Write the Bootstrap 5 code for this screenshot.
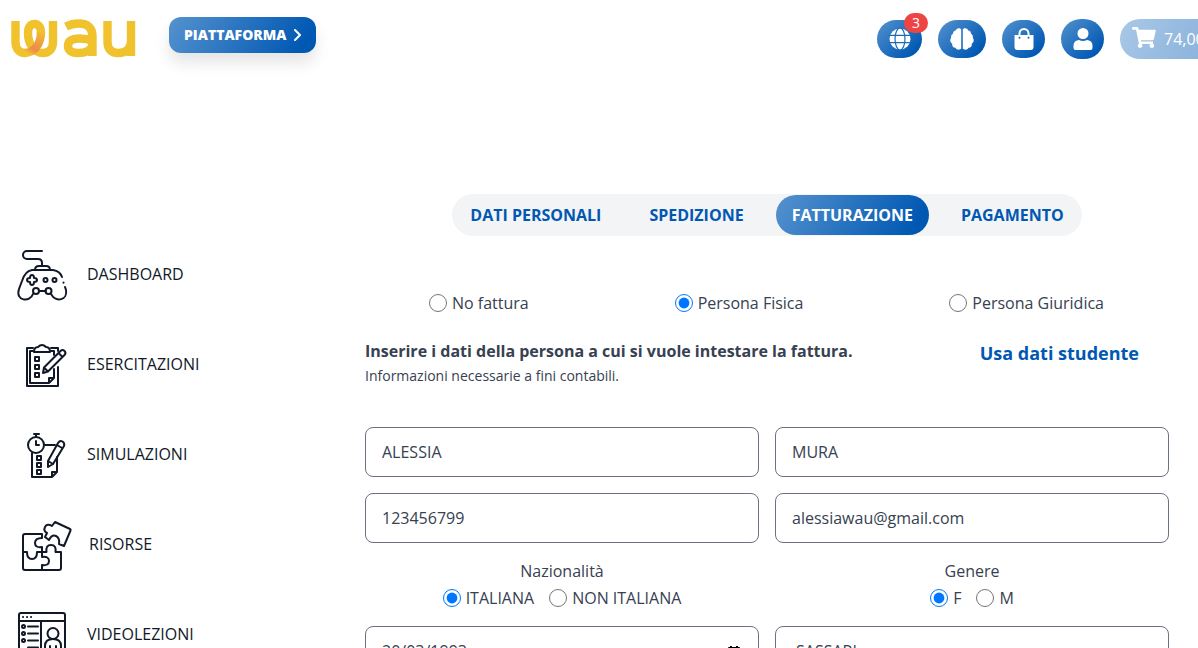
<!DOCTYPE html>
<html lang="it">
<head>
<meta charset="utf-8">
<meta name="viewport" content="width=device-width, initial-scale=1">
<title>WAU – Fatturazione</title>
<link href="https://cdn.jsdelivr.net/npm/bootstrap@5.3.0/dist/css/bootstrap.min.css" rel="stylesheet">
<style>
:root { --wau-blue: #0058b3; --wau-grad: linear-gradient(120deg, #5592ce, #0058b3 90%); }
html { overflow: hidden; }
body { font-family: "Open Sans", "Noto Sans", sans-serif; color: #374151; line-height: 24px; overflow: hidden; }
.site-header { height: 78px; padding-left: 8px; }
.logo { width: 130px; height: 64px; }
.btn-platform { background: var(--wau-grad); color: #fff; font-size: 14px; font-weight: 800; line-height: 20px; padding: 8px 15px; border: 0; border-radius: 12px; margin: 0 0 8px 31px; box-shadow: 0 10px 15px rgba(0,0,0,.1); }
.btn-round { background: linear-gradient(135deg, #5592ce, #0058b3 85%); color: #fff; height: 40px; border: 0; padding: 0 10px 2px; }
.btn-short { height: 38px; }
.count { position: absolute; top: -7px; right: -6px; background: #ef4444; color: #fff; font-size: 14px; line-height: 20px; width: 24px; border-radius: 10px; }
.btn-cart { width: 78px; opacity: .5; background: linear-gradient(120deg, #5592ce, #0058b3 130px); color: #fff; height: 40px; border: 0; padding: 0 0 0 12px; overflow: hidden; white-space: nowrap; }
.btn-cart svg { margin-bottom: 4px; }
.side { width: 336px; padding-top: 229px; margin-top: -78px; padding-left: 17px; }
.side a { height: 90px; color: #111827; gap: 20px; text-decoration: none; }
.side svg { width: 50px; height: 54px; fill: none; stroke: #111827; stroke-width: 2; stroke-linecap: round; stroke-linejoin: round; overflow: visible; }
.side svg.wide { width: 52px; }
.page-main { padding: 116px 29px 0; min-width: 0; }
.steps { background: #f3f4f6; border-radius: 21px; height: 42px; padding: 0 2px; }
.steps .nav-link { color: var(--wau-blue); font-weight: 700; padding: 8px 16px; border-radius: 20px; line-height: 24px; }
.steps .nav-link.active { background: var(--wau-grad); color: #fff; }
.steps .nav-item + .nav-item { margin-left: 16px; }
.choice { display: inline-flex; align-items: center; gap: 5px; }
.choice input { width: 18px; height: 18px; margin: 0; }
.kinds { padding: 0 65px 0 64px; margin-top: 55px; }
.answers { gap: 15px; padding-top: 3px; }
.intro { margin-top: 24px; padding-right: 30px; margin-bottom: 39px; }
.intro h1 { font-size: 16px; line-height: 24px; font-weight: 700; margin: 0; }
.intro p { font-size: 14px; line-height: 24px; margin: 1px 0 0; }
.intro a { font-size: 18px; line-height: 28px; font-weight: 700; color: var(--wau-blue); text-decoration: none; }
.fields { --bs-gutter-x: 16px; --bs-gutter-y: 16px; }
.fields .form-control { height: 50px; border: 1px solid #6b7280; border-radius: 8px; padding: 8px 16px; color: #374151; }
.fields .form-control.city { padding-left: 20px; }
.pick-date { position: absolute; right: 18px; top: 17px; border: 0; background: none; padding: 0; line-height: 1; }
</style>
</head>
<body>
<header class="site-header d-flex align-items-center">
  <a href="#" aria-label="WAU">
    <svg class="logo d-block" viewBox="8 6 130 64" fill="none" stroke="#f0c22d" stroke-width="8.4">
      <defs><linearGradient id="fold" gradientUnits="userSpaceOnUse" x1="42" y1="30" x2="29" y2="53"><stop stop-color="#f0c22d"/><stop offset=".45" stop-color="#ef9f3e"/><stop offset=".75" stop-color="#ed8a4c"/><stop offset="1" stop-color="#f0c22d"/></linearGradient></defs>
      <path d="M41 32C41 26 38.500 23 34.500 23C30.500 23 28 26 28 32C28 43 34 52 43 52C49 52 53 48 53 41V20"/>
      <path d="M15.500 20V41C15.500 48 19.500 52 25 52"/>
      <path stroke="url(#fold)" d="M24.500 52C35 52 41 42 41 31"/>
      <path d="M66 25.500C70 23.500 74 22.500 79 22.500C88 22.500 92.500 27 92.500 35V55M92.500 40C88 38 84 37.500 80 37.500C72 37.500 68 40 68 45C68 50 72 52 78 52C87 52 92.500 48 92.500 42M107.500 20V41C107.500 48 111 52 118 52C126 52 131 48 131 40M131 20V55"/>
    </svg>
  </a>
  <button type="button" class="btn btn-platform d-flex align-items-center">PIATTAFORMA
    <svg class="ms-2" width="7" height="12" viewBox="0 0 7 12" fill="none" stroke="#fff" stroke-width="2" stroke-linecap="round" stroke-linejoin="round"><path d="M1 1l5 5-5 5"/></svg>
  </button>
  <div class="ms-auto d-flex align-items-center gap-3">
    <button type="button" class="btn-round btn-short rounded-pill position-relative" aria-label="Lingua" style="width:45px">
      <svg width="22" height="22" viewBox="0 0 22 22"><circle cx="11" cy="11" r="10.500" fill="#fff"/><g fill="none" stroke="#1c69ba" stroke-width="1.200"><path d="M0 7.300h22M0 14.700h22"/><ellipse cx="11" cy="11" rx="5" ry="11"/></g></svg>
      <span class="count">3</span>
    </button>
    <button type="button" class="btn-round btn-short rounded-pill" aria-label="Esercizi" style="width:48px">
      <svg width="24" height="22" viewBox="0 0 24 22" fill="#fff"><path d="M11.200 1.500v19c-1 1.300-4.500 2-5.800-.7C3 20 1.700 17.500 2.300 15.700 0 14.500-.3 11.500 1.200 9.700.8 8 1.700 6.400 3 5.800 3 4 4 2.800 5.700 2.600 6.500-.3 10-.6 11.200 1.500zM12.800 1.500v19c1 1.300 4.500 2 5.800-.7 2.400.2 3.700-2.300 3.100-4.100 2.300-1.200 2.600-4.200 1.100-6 .4-1.700-.5-3.300-1.800-3.900 0-1.800-1-3-2.700-3.200C17.500-.3 14-.6 12.800 1.500z"/></svg>
    </button>
    <button type="button" class="btn-round btn-short rounded-pill" aria-label="Negozio" style="width:43px">
      <svg width="20" height="22" viewBox="0 0 20 22"><path fill="#fff" d="M.5 7h19v12a3 3 0 0 1-3 3h-13a3 3 0 0 1-3-3z"/><path fill="none" stroke="#fff" stroke-width="2" d="M5.500 8V5.500a4.500 4.500 0 0 1 9 0V8"/><circle cx="5.500" cy="9.700" r="1" fill="#1c69ba"/><circle cx="14.500" cy="9.700" r="1" fill="#1c69ba"/></svg>
    </button>
    <button type="button" class="btn-round rounded-pill" aria-label="Profilo" style="width:43px">
      <svg width="20" height="24" viewBox="0 0 20 24" fill="#fff"><circle cx="10" cy="6.500" r="5.500"/><path d="M.5 21v-2.500A5.500 5.500 0 0 1 6 13q4 2 8 0a5.500 5.500 0 0 1 5.500 5.500V21q0 2-2 2h-15q-2 0-2-2z"/></svg>
    </button>
    <button type="button" class="btn-cart rounded-start-pill text-start d-flex align-items-center gap-2">
      <svg class="flex-shrink-0" width="24" height="21" viewBox="0 0 576 512" fill="#fff"><path d="M528.120 301.319l47.273-208C578.806 78.301 567.391 64 551.990 64H159.208l-9.166-44.810C147.758 8.021 137.930 0 126.529 0H24C10.745 0 0 10.745 0 24v16c0 13.255 10.745 24 24 24h69.883l70.248 343.435C147.325 417.100 136 435.222 136 456c0 30.928 25.072 56 56 56s56-25.072 56-56c0-15.674-6.447-29.835-16.824-40h209.647C430.447 426.165 424 440.326 424 456c0 30.928 25.072 56 56 56s56-25.072 56-56c0-22.172-12.888-41.332-31.579-50.405l5.517-24.276c3.413-15.018-8.002-29.319-23.403-29.319H218.117l-6.545-32h293.145c11.206 0 20.920-7.754 23.403-18.681z"/></svg>
      <span>74,00&nbsp;€</span>
    </button>
  </div>
</header>

<div class="d-flex">
  <nav class="side flex-shrink-0 d-flex flex-column" aria-label="Menu">
    <a href="#" class="d-flex align-items-center">
      <svg viewBox="0 -2 50 54"><path d="M25 2H10a4 4 0 0 0 0 8h11q4 0 4 4v3M18 21q0-4 4-4h7q4 0 4 4"/><path d="M45 28Q43 22 36 21H15Q8 22 5 32L2 40c-4 12 11 14 14 5M48 38l1 3c2 10-10 13-15 4M22 42h7"/><path d="M46.500 33.500v.2"/><circle cx="19" cy="42" r="3"/><circle cx="31.500" cy="42" r="3"/><circle cx="28.500" cy="31" r="2"/><circle cx="37.500" cy="31" r="2"/><path d="M13.500 26.500q2 0 2 3 3 0 3 2t-3 2q0 3-2 3t-2-3q-3 0-3-2t3-2q0-3 2-3z" transform="translate(1.500 -.5)"/></svg>
      DASHBOARD</a>
    <a href="#" class="d-flex align-items-center">
      <svg viewBox="0 -1 50 54"><path d="M16 10H10v38h31V29M34 10h7v3"/><path d="M16 13h-3v32h19l5-5V31M34 13h3v4M32 45v-5h5"/><path d="M17 14q0-5 4-5 4-4 8 0 4 0 4 5z"/><path d="M27 29.500L43.500 13q2-2 4 0t0 4L31 33.500l-5 1.500zM27 29.500l4 4M41.500 15l4 4"/><path d="M18 19h4v4h-4zM18 27h4v4h-4zM18 35h4v4h-4z"/></svg>
      ESERCITAZIONI</a>
    <a href="#" class="d-flex align-items-center">
      <svg viewBox="0 -1 50 54"><circle cx="19" cy="17" r="8"/><path d="M19 13v4h3M17 6h5M19 6v3M28 17h10M15 25v24h20l5-5V29M35 49v-5h5"/><path d="M31 33L41 15q2-3 4.500-1.500T47 18L36 36l-5 3zM31 33l5 3M40 17l5 3"/><path d="M20 28h4v4h-4zM20 35h4v4h-4zM20 42h4v4h-4z"/></svg>
      SIMULAZIONI</a>
    <a href="#" class="d-flex align-items-center">
      <svg class="wide" viewBox="0 -2 52 54"><path d="M25 15H8q-2 0-2 2v32q0 2 2 2h34q2 0 2-2V33H38.500q1-7-4.500-7t-4.500 7H25v-5q-7 1-7-4t7-5zM6 33h4q0 7 5 7t5-7h5v5q7-1 7 4t-7 4v5"/><path d="M38 3l15 7q1 .5.500 1.500L47 27l-5-2q1-6-3-8t-7 4l-4-3 2-4q-4-2-2-6t7-1z"/></svg>
      RISORSE</a>
    <a href="#" class="d-flex align-items-center">
      <svg viewBox="0 0 50 54"><rect x="2" y="6" width="46" height="44" rx="2"/><path d="M2 14h46M24 14v36M11 19.500h10M11 26.500h10M11 33.500h10M11 40.500h10M6 10h.1M10 10h.1M14 10h.1"/><circle cx="6.500" cy="19.500" r="1.500"/><circle cx="6.500" cy="26.500" r="1.500"/><circle cx="6.500" cy="33.500" r="1.500"/><circle cx="36" cy="26.500" r="5.500"/><path d="M28 48V39q0-7 8-7t8 7v9M33 48v-9M39 48v-9"/></svg>
      VIDEOLEZIONI</a>
  </nav>

  <main class="page-main flex-grow-1">
    <div class="d-flex justify-content-center">
      <ul class="steps nav flex-nowrap align-items-center">
        <li class="nav-item"><a class="nav-link" href="#">DATI PERSONALI</a></li>
        <li class="nav-item"><a class="nav-link" href="#">SPEDIZIONE</a></li>
        <li class="nav-item"><a class="nav-link active" aria-current="step" href="#">FATTURAZIONE</a></li>
        <li class="nav-item"><a class="nav-link" href="#">PAGAMENTO</a></li>
      </ul>
    </div>
    <form>
      <div class="kinds d-flex justify-content-between">
        <label class="choice"><input type="radio" name="tipo">No fattura</label>
        <label class="choice"><input type="radio" name="tipo" checked>Persona Fisica</label>
        <label class="choice"><input type="radio" name="tipo">Persona Giuridica</label>
      </div>
      <div class="intro d-flex justify-content-between">
        <div>
          <h1>Inserire i dati della persona a cui si vuole intestare la fattura.</h1>
          <p>Informazioni necessarie a fini contabili.</p>
        </div>
        <a href="#">Usa dati studente</a>
      </div>
      <div class="fields row">
        <div class="col-6"><input class="form-control" type="text" aria-label="Nome" value="ALESSIA"></div>
        <div class="col-6"><input class="form-control" type="text" aria-label="Cognome" value="MURA"></div>
        <div class="col-6"><input class="form-control" type="tel" aria-label="Telefono" value="123456799"></div>
        <div class="col-6"><input class="form-control" type="email" aria-label="Email" value="alessiawau@gmail.com"></div>
        <div class="col-6 text-center" role="radiogroup" aria-labelledby="naz">
          <div id="naz">Nazionalità</div>
          <div class="answers d-flex justify-content-center">
            <label class="choice"><input type="radio" name="naz" checked>ITALIANA</label>
            <label class="choice"><input type="radio" name="naz">NON ITALIANA</label>
          </div>
        </div>
        <div class="col-6 text-center" role="radiogroup" aria-labelledby="gen">
          <div id="gen">Genere</div>
          <div class="answers d-flex justify-content-center">
            <label class="choice"><input type="radio" name="gen" checked>F</label>
            <label class="choice"><input type="radio" name="gen">M</label>
          </div>
        </div>
        <div class="col-6">
          <div class="position-relative">
            <input class="form-control" type="text" inputmode="numeric" aria-label="Data di nascita" value="20/03/1993">
            <button type="button" class="pick-date" aria-label="Apri calendario"><svg width="14" height="15" viewBox="0 0 14 15"><path fill="#000" d="M3 1h2v1h4V1h2v1h1q1 0 1 1v10q0 1-1 1H2q-1 0-1-1V3q0-1 1-1h1zM2.500 6v6.500h9V6zM7.500 8h3v3h-3z" fill-rule="evenodd"/></svg></button>
          </div>
        </div>
        <div class="col-6"><input class="form-control city" type="text" aria-label="Luogo di nascita" value="SASSARI"></div>
      </div>
    </form>
  </main>
</div>
<script src="https://cdn.jsdelivr.net/npm/bootstrap@5.3.0/dist/js/bootstrap.bundle.min.js"></script>
</body>
</html>
